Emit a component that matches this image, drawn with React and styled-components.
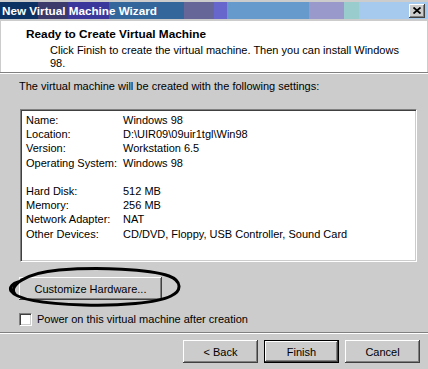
import React from "react";
import styled, { createGlobalStyle } from "styled-components";

// ─── Global ─────────────────────────────────────────────────────────────────

const GlobalStyle = createGlobalStyle`
  html, body {
    margin: 0;
    padding: 0;
    background: #cccccc;
  }
  * { box-sizing: border-box; }
`;

const FACE = "#cccccc";
const SHADOW = "#808080";
const DARK = "#404040";

// ─── Styled Components ─────────────────────────────────────────────────────

const Window = styled.div`
  width: 428px;
  height: 369px;
  background: ${FACE};
  padding-top: 2px;
  font-family: "Liberation Sans", Arial, sans-serif;
  font-size: 11px;
  color: #000;
  overflow: hidden;
  display: flex;
  flex-direction: column;
`;

const TitleBar = styled.div`
  height: 17px;
  display: flex;
  align-items: center;
  justify-content: space-between;
  padding: 0 2px 0 2px;
  background: linear-gradient(
    to right,
    #0b3262 0 38px,
    #3b3a6b 38px 68px,
    #3a389a 68px 109px,
    #33669a 109px 184px,
    #666699 184px 214px,
    #6666cc 214px 227px,
    #6699cc 227px 309px,
    #9a99cc 309px 344px,
    #99cccc 344px 359px,
    #a6c9ee 359px 100%
  );
`;

const TitleText = styled.span`
  color: #fff;
  font-weight: 700;
  font-size: 11.7px;
  line-height: 17px;
  white-space: nowrap;
`;

const CloseBox = styled.div`
  width: 16px;
  height: 14px;
  margin-right: 1px;
  background: ${FACE};
  box-shadow: inset -1px -1px 0 ${DARK}, inset 1px 1px 0 #fff,
    inset -2px -2px 0 ${SHADOW};
  display: flex;
  align-items: center;
  justify-content: center;
`;

const Header = styled.div`
  margin-top: 2px;
  height: 51px;
  background: #fff;
  border-left: 1px solid ${FACE};
  border-right: 1px solid ${FACE};
  padding: 7px 0 0 25px;
`;

const HeaderTitle = styled.div`
  font-weight: 700;
  font-size: 11.8px;
  line-height: 13px;
`;

const HeaderText = styled.div`
  margin: 3px 0 0 24px;
  width: 356px;
  line-height: 13px;
`;

const Separator = styled.div`
  height: 2px;
  border-top: 1px solid ${SHADOW};
  border-bottom: 1px solid #fff;
`;

const Body = styled.div`
  flex: 1;
  padding: 6px 11px 0 20px;
  display: flex;
  flex-direction: column;
`;

const Intro = styled.div`
  line-height: 13px;
  margin: 0 0 0 -1px;
`;

const SettingsBox = styled.div`
  margin-top: 16px;
  height: 153px;
  background: #fff;
  border-top: 1px solid ${SHADOW};
  border-left: 1px solid ${SHADOW};
  border-right: 1px solid #fff;
  border-bottom: 1px solid #fff;
  box-shadow: inset 1px 1px 0 ${DARK}, inset -1px -1px 0 ${FACE};
  padding: 3px 0 0 5px;
`;

const Row = styled.div`
  display: grid;
  grid-template-columns: 97px 1fr;
  height: 14.2px;
  line-height: 14px;
  white-space: nowrap;
`;

const Gap = styled.div`
  height: 14.2px;
`;

const CustomizeWrap = styled.div`
  position: relative;
  align-self: flex-start;
  margin: 15px 0 0 -1px;
`;

const Button = styled.button`
  font-family: "Liberation Sans", Arial, sans-serif;
  font-size: 11px;
  color: #000;
  height: ${(p) => p.$h || 23}px;
  width: ${(p) => p.$w || 75}px;
  padding: 0;
  background: ${FACE};
  border: none;
  outline: ${(p) => (p.$default ? "1px solid #000" : "none")};
  outline-offset: -1px;
  box-shadow: ${(p) =>
    p.$default
      ? `inset -2px -2px 0 ${DARK}, inset 2px 2px 0 #fff, inset -3px -3px 0 ${SHADOW}`
      : `inset -1px -1px 0 ${DARK}, inset 1px 1px 0 #fff, inset -2px -2px 0 ${SHADOW}`};
`;

const Ellipse = styled.svg`
  position: absolute;
  left: -12px;
  top: -10px;
  pointer-events: none;
`;

const CheckRow = styled.label`
  display: flex;
  align-items: center;
  gap: 5px;
  margin: 13px 0 0 -1px;
  line-height: 13px;
`;

const CheckBox = styled.span`
  width: 13px;
  height: 13px;
  background: #fff;
  border-top: 1px solid ${SHADOW};
  border-left: 1px solid ${SHADOW};
  border-right: 1px solid #fff;
  border-bottom: 1px solid #fff;
  box-shadow: inset 1px 1px 0 ${DARK}, inset -1px -1px 0 ${FACE};
`;

const Footer = styled.div`
  display: flex;
  justify-content: flex-end;
  gap: 6px;
  padding: 6px 8px 0 0;
  height: 35px;
`;

// ─── Data ───────────────────────────────────────────────────────────────────

const settings = [
  ["Name:", "Windows 98"],
  ["Location:", "D:\\UIR09\\09uir1tgl\\Win98"],
  ["Version:", "Workstation 6.5"],
  ["Operating System:", "Windows 98"],
  null,
  ["Hard Disk:", "512 MB"],
  ["Memory:", "256 MB"],
  ["Network Adapter:", "NAT"],
  ["Other Devices:", "CD/DVD, Floppy, USB Controller, Sound Card"],
];

// ─── Component ──────────────────────────────────────────────────────────────

export default function App() {
  return (
    <>
      <GlobalStyle />
      <Window>
        <TitleBar>
          <TitleText>New Virtual Machine Wizard</TitleText>
          <CloseBox>
            <svg width="8" height="7" viewBox="0 0 8 7">
              <path d="M0.5 0.5 L7.5 6.5 M7.5 0.5 L0.5 6.5" stroke="#000" strokeWidth="1.8" />
            </svg>
          </CloseBox>
        </TitleBar>

        <Header>
          <HeaderTitle>Ready to Create Virtual Machine</HeaderTitle>
          <HeaderText>
            Click Finish to create the virtual machine. Then you can install Windows 98.
          </HeaderText>
        </Header>
        <Separator />

        <Body>
          <Intro>The virtual machine will be created with the following settings:</Intro>

          <SettingsBox>
            {settings.map((s, i) =>
              s ? (
                <Row key={i}>
                  <span>{s[0]}</span>
                  <span>{s[1]}</span>
                </Row>
              ) : (
                <Gap key={i} />
              )
            )}
          </SettingsBox>

          <CustomizeWrap>
            <Button $w={143} $h={23}>Customize Hardware...</Button>
            <Ellipse width="178" height="44" viewBox="-12 -10 178 44">
              <path
                d="M-4 17 C-11 9 6 -4 40 -7 C80 -10 130 -8 150 -1 C163 4 163 14 152 19 C138 26 100 29 65 28 C30 27 -2 23 -8 14 C-10 10 -6 6 -1 5"
                fill="none"
                stroke="#000"
                strokeWidth="3"
                strokeLinecap="round"
              />
            </Ellipse>
          </CustomizeWrap>

          <CheckRow>
            <CheckBox />
            <span>Power on this virtual machine after creation</span>
          </CheckRow>
        </Body>

        <Separator />
        <Footer>
          <Button>&lt; Back</Button>
          <Button $default>Finish</Button>
          <Button>Cancel</Button>
        </Footer>
      </Window>
    </>
  );
}
